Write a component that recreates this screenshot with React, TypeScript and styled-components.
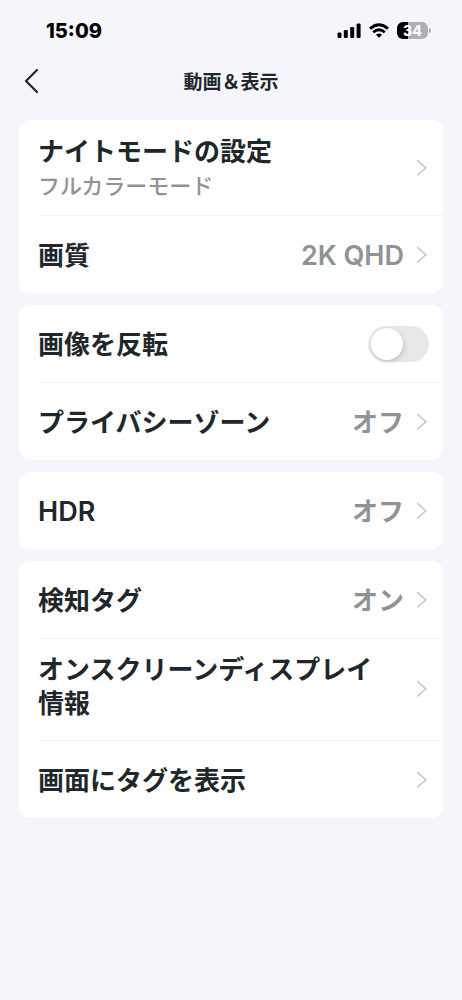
import React, { useState } from "react";
import styled, { createGlobalStyle } from "styled-components";

const GlobalStyle = createGlobalStyle`
  *, *::before, *::after { box-sizing: border-box; }
  body {
    margin: 0;
    background: #f5f6fb;
    color: #20272b;
    font-family: Inter, "Noto Sans CJK JP", sans-serif;
  }
`;

const Screen = styled.div`
  min-height: 100vh;
  background: #f5f6fb;
`;

const StatusBar = styled.div`
  display: flex;
  align-items: center;
  justify-content: space-between;
  height: 60px;
  padding: 1px 31px 0 46px;
  color: #000;
`;

const Clock = styled.time`
  font-size: 20px;
  line-height: 24px;
  font-weight: 800;
`;

const StatusIcons = styled.div`
  display: flex;
  align-items: center;
  gap: 8px;
`;

const Battery = styled.div`
  display: flex;
  align-items: center;
  gap: 1px;
`;

const BatteryBody = styled.div`
  width: 31px;
  height: 17px;
  border-radius: 6px;
  background: linear-gradient(to right, #000 35%, #b0b0b2 35%);
  color: #fff;
  font-size: 14px;
  line-height: 17px;
  font-weight: 800;
  text-align: center;
`;

const BatteryTip = styled.div`
  width: 2px;
  height: 5px;
  border-radius: 0 2px 2px 0;
  background: #b0b0b2;
`;

const NavBar = styled.header`
  display: grid;
  grid-template-columns: 48px 1fr 48px;
  align-items: center;
  height: 42px;
  padding: 0 8px;
`;

const BackButton = styled.button`
  display: flex;
  align-items: center;
  justify-content: center;
  height: 42px;
  padding: 0;
  border: 0;
  background: none;
  color: #20272b;
`;

const Title = styled.h1`
  margin: 0;
  padding-top: 4px;
  font-size: 19px;
  line-height: 28px;
  font-weight: 600;
  text-align: center;
`;

const Settings = styled.main`
  display: flex;
  flex-direction: column;
  gap: 12px;
  padding: 18px 19px 32px;
`;

const Card = styled.section`
  padding-left: 19px;
  border-radius: 12px;
  background: #fff;
  overflow: hidden;
`;

type RowKind = "single" | "note" | "wrapped";

const rowPadding: Record<RowKind, string> = {
  single: "14px 14px 14px 0",
  note: "13px 14px 12px 0",
  wrapped: "12px 14px 19px 0",
};

const Row = styled.div<{ $kind?: RowKind }>`
  display: flex;
  align-items: center;
  gap: 11px;
  width: 100%;
  min-height: 77px;
  padding: ${({ $kind = "single" }) => rowPadding[$kind]};
  border: 0;
  background: none;
  color: inherit;
  font: inherit;
  text-align: left;

  & + & {
    min-height: 78px;
    border-top: 1px solid #f3f3f5;
  }
`;

const Texts = styled.span`
  display: flex;
  flex: 1;
  flex-direction: column;
  min-width: 0;
  padding: 2px 16px 0 0;
`;

const Label = styled.span<{ $latin?: boolean }>`
  font-size: ${({ $latin }) => ($latin ? 27 : 26)}px;
  line-height: 34px;
  font-weight: 600;
`;

const Note = styled.span`
  color: #8f9395;
  font-size: 22px;
  line-height: 34px;
  font-weight: 500;
`;

const Value = styled(Label)`
  padding-top: 2px;
  color: #8f9395;
`;

const Switch = styled.input`
  appearance: none;
  flex: none;
  width: 61px;
  height: 36px;
  margin: 0;
  padding: 2px 3px;
  border-radius: 18px;
  background: #e7e7e7;

  &::before {
    content: "";
    display: block;
    width: 32px;
    height: 32px;
    border-radius: 50%;
    background: #fff;
    box-shadow: 1px 2px 4px rgba(0, 0, 0, 0.16);
  }

  &:checked {
    background: #34c759;
  }

  &:checked::before {
    margin-left: auto;
  }
`;

const ChevronIcon = styled.svg<{ $kind: RowKind }>`
  flex: none;
  margin-top: ${({ $kind }) => ($kind === "wrapped" ? 6 : 0)}px;
`;

const Chevron = ({ kind }: { kind: RowKind }) => (
  <ChevronIcon $kind={kind} width="14" height="20" viewBox="0 0 14 20" fill="none" aria-hidden="true">
    <path d="M2.2 2.2 L10.8 9.8 L2.2 17.4" stroke="#c9caca" strokeWidth="1.7" />
  </ChevronIcon>
);

const isLatin = (text: string) => /^[\x20-\x7e]+$/.test(text);

type LinkRowProps = { label: string; note?: string; value?: string; kind?: RowKind };

const LinkRow = ({ label, note, value, kind = "single" }: LinkRowProps) => (
  <Row as="button" type="button" $kind={kind}>
    <Texts>
      <Label $latin={isLatin(label)}>{label}</Label>
      {note && <Note>{note}</Note>}
    </Texts>
    {value && <Value $latin={isLatin(value)}>{value}</Value>}
    <Chevron kind={kind} />
  </Row>
);

export default function App() {
  const [flipped, setFlipped] = useState(false);

  return (
    <Screen>
      <GlobalStyle />
      <StatusBar>
        <Clock>15:09</Clock>
        <StatusIcons>
          <svg width="24" height="16" viewBox="0 0 24 16" aria-hidden="true">
            <rect x="0.5" y="9.5" width="4" height="5.5" rx="1.2" />
            <rect x="6.8" y="7" width="4" height="8" rx="1.2" />
            <rect x="13.2" y="4" width="4" height="11" rx="1.2" />
            <rect x="19.6" y="0.5" width="4" height="14.5" rx="1.2" />
          </svg>
          <svg width="20" height="16" viewBox="0 0 20 16" fill="none" stroke="#000" aria-hidden="true">
            <path d="M1 5.6 Q10 -2.2 19 5.6" strokeWidth="2.8" />
            <path d="M4.2 9.2 Q10 4.2 15.8 9.2" strokeWidth="2.8" />
            <path d="M10 14.8 L6.9 11.8 Q10 9.2 13.1 11.8 Z" fill="#000" stroke="none" />
          </svg>
          <Battery>
            <BatteryBody>34</BatteryBody>
            <BatteryTip />
          </Battery>
        </StatusIcons>
      </StatusBar>
      <NavBar>
        <BackButton type="button" aria-label="戻る">
          <svg width="16" height="26" viewBox="0 0 16 26" fill="none" aria-hidden="true">
            <path d="M13 2 L2 13 L13 24" stroke="currentColor" strokeWidth="2.2" strokeLinecap="round" strokeLinejoin="round" />
          </svg>
        </BackButton>
        <Title>動画＆表示</Title>
      </NavBar>
      <Settings>
        <Card>
          <LinkRow label="ナイトモードの設定" note="フルカラーモード" kind="note" />
          <LinkRow label="画質" value="2K QHD" />
        </Card>
        <Card>
          <Row as="label">
            <Texts>
              <Label>画像を反転</Label>
            </Texts>
            <Switch
              type="checkbox"
              role="switch"
              checked={flipped}
              onChange={(event) => setFlipped(event.target.checked)}
            />
          </Row>
          <LinkRow label="プライバシーゾーン" value="オフ" />
        </Card>
        <Card>
          <LinkRow label="HDR" value="オフ" />
        </Card>
        <Card>
          <LinkRow label="検知タグ" value="オン" />
          <LinkRow label="オンスクリーンディスプレイ情報" kind="wrapped" />
          <LinkRow label="画面にタグを表示" />
        </Card>
      </Settings>
    </Screen>
  );
}
